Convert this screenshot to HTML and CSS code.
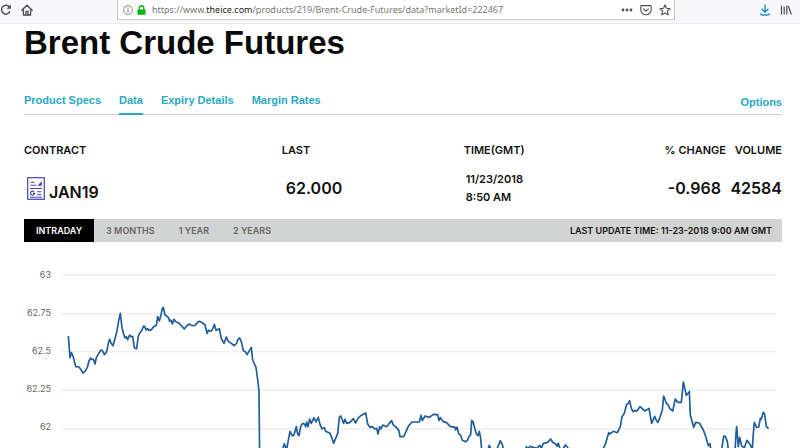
FILE: index.html
```html
<!DOCTYPE html>
<html lang="en">
<head>
<meta charset="utf-8">
<title>Brent Crude Futures</title>
<link rel="stylesheet" href="styles.css">
</head>
<body>
<header class="toolbar">
  <div class="nav-buttons">
    <button class="tool" aria-label="Reload"><svg width="12" height="12" viewBox="0 0 12 12"><path d="M9.6 3.2A4.4 4.4 0 1 0 10 7.4" fill="none" stroke="#4c4c4f" stroke-width="1.4"/><path d="M10.8.6v4.2H6.6z" fill="#4c4c4f"/></svg></button>
    <button class="tool" aria-label="Home"><svg width="12" height="12" viewBox="0 0 12 12"><path d="M.8 6.2 6 1.2l5.200 5M2.400 5.400v5.600h7.200V5.400M5 11V7.300h2V11" fill="none" stroke="#4c4c4f" stroke-width="1.300" stroke-linejoin="round" stroke-linecap="round"/></svg></button>
  </div>
  <div class="address">
    <svg width="10" height="10" viewBox="0 0 10 10"><circle cx="5" cy="5" r="4.400" fill="none" stroke="#777" stroke-width=".9"/><path d="M5 4.300v3.200M5 2.400v1.100" stroke="#777" stroke-width="1.100"/></svg>
    <svg width="9" height="10" viewBox="0 0 9 10"><path d="M2.200 5V3a2.300 2.300 0 0 1 4.600 0v2" fill="none" stroke="#12b312" stroke-width="1.400"/><rect x=".4" y="4.400" width="8.200" height="5.400" rx=".8" fill="#12b312"/></svg>
    <div class="url">https://www.<b>theice.com</b>/products/219/Brent-Crude-Futures/data?marketId=222467</div>
    <button class="tool" aria-label="Page actions"><svg width="12" height="12" viewBox="0 0 12 12"><g fill="#4c4c4f"><circle cx="2" cy="6" r="1.400"/><circle cx="6" cy="6" r="1.400"/><circle cx="10" cy="6" r="1.400"/></g></svg></button>
    <button class="tool" aria-label="Save to Pocket"><svg width="12" height="12" viewBox="0 0 12 12"><path d="M1.600 1.600h8.800q.8 0 .8.800v3.200a5.200 5.200 0 0 1-10.400 0V2.400q0-.8.800-.8zM3.600 4.800 6 7.100l2.400-2.300" fill="none" stroke="#4c4c4f" stroke-width="1.100" stroke-linecap="round" stroke-linejoin="round"/></svg></button>
    <button class="tool" aria-label="Bookmark"><svg width="12" height="12" viewBox="0 0 12 12"><path d="m6 .9 1.500 3.400 3.700.4-2.800 2.500.8 3.700L6 9l-3.200 1.900.8-3.700L.8 4.700l3.700-.4z" fill="none" stroke="#4c4c4f" stroke-width="1.100" stroke-linejoin="round"/></svg></button>
  </div>
  <div class="side-buttons">
    <button class="tool" aria-label="Downloads"><svg width="12" height="12" viewBox="0 0 12 12"><path d="M6 .6v7.200M2.600 4.800 6 8.200l3.400-3.400M1.600 9.200c.2 1.400.6 1.800 1.400 1.800h6c.8 0 1.200-.4 1.400-1.800" fill="none" stroke="#2a8fc8" stroke-width="1.400"/></svg></button>
    <button class="tool" aria-label="Library"><svg width="12" height="12" viewBox="0 0 12 12"><path d="M1.500 1.500v9M4.200 2.500v8M6.800 1.500v9M8.300 2l3 8.500" fill="none" stroke="#4c4c4f" stroke-width="1.200"/></svg></button>
  </div>
</header>
<main class="page">
  <h1>Brent Crude Futures</h1>
  <nav class="tabs">
    <a href="#specs">Product Specs</a>
    <a href="#data" class="current">Data</a>
    <a href="#expiry">Expiry Details</a>
    <a href="#margin">Margin Rates</a>
    <a href="#options" class="options">Options</a>
  </nav>
  <table class="quote">
    <colgroup><col class="c-contract"><col class="c-last"><col class="c-time"><col><col class="c-volume"></colgroup>
    <thead>
      <tr><th>CONTRACT</th><th>LAST</th><th>TIME(GMT)</th><th class="num">% CHANGE</th><th class="num">VOLUME</th></tr>
    </thead>
    <tbody>
      <tr>
        <td><div class="contract"><svg width="18" height="23" viewBox="0 0 18 23"><g fill="none" stroke="#4545ad"><rect x=".7" y=".7" width="16.600" height="21.600" stroke-width="1.200"/><path d="M3.500 5.200h4M3.500 8.200h6M3 11.500h12M10 14.700h4.500M10 17.700h4.500M3 20.200h12" stroke-width="1.100"/><path d="M7 14.800a2 2 0 1 0 .5 1.600H6" stroke-width="1.200"/></g><path d="M10.500 8.700 14.800 4v4.700z" fill="#4545ad"/></svg><span>JAN19</span></div></td>
        <td class="last">62.000</td>
        <td class="time">11/23/2018<br>8:50 AM</td>
        <td class="num change">-0.968</td>
        <td class="num">42584</td>
      </tr>
    </tbody>
  </table>
  <div class="range">
    <button class="active">INTRADAY</button>
    <button>3 MONTHS</button>
    <button>1 YEAR</button>
    <button>2 YEARS</button>
    <span class="updated">LAST UPDATE TIME: 11-23-2018 9:00 AM GMT</span>
  </div>
  <svg class="chart" viewBox="72 -54 2274 618" role="img" aria-label="Intraday price">
    <path class="grid" d="M183 45H2328M183 162H2328M183 275H2328M183 390H2328M183 507H2328"/>
    <g class="axis">
      <text x="153" y="53">63</text>
      <text x="153" y="167">62.75</text>
      <text x="153" y="282">62.5</text>
      <text x="153" y="397">62.25</text>
      <text x="153" y="510">62</text>
    </g>
    <polyline class="price" points="205,228 210,293 214,278 219,288 227,320 237,321 242,328 249,339 255,334 262,322 267,303 272,294 276,298 280,298 285,312 289,293 296,281 303,270 308,273 313,284 320,275 325,250 329,238 333,249 339,257 345,236 351,212 356,182 361,160 366,203 371,222 375,234 379,230 383,239 389,225 393,230 398,229 403,264 410,266 415,228 420,218 425,212 431,198 434,199 438,210 442,206 447,211 454,209 460,201 469,196 473,170 478,183 483,165 487,145 490,142 495,165 505,172 509,184 513,180 517,192 522,178 527,185 535,188 545,198 553,207 560,198 568,192 576,197 585,196 593,187 598,184 608,189 615,195 621,220 625,211 633,214 638,207 643,193 648,211 658,206 664,236 672,250 679,231 685,244 694,250 702,257 710,250 714,238 719,234 724,245 730,272 736,275 741,284 747,274 754,262 758,300 768,322 774,366 777,395 779,600 845,600 849,563 853,551 858,565 861,563 866,535 870,514 877,528 882,524 889,500 893,522 897,527 902,500 908,490 914,493 917,500 920,486 924,500 929,477 934,490 942,473 948,486 955,472 960,493 966,506 973,503 977,514 990,520 996,535 1001,550 1007,535 1013,521 1018,472 1022,468 1027,480 1031,490 1035,478 1040,490 1050,487 1060,476 1067,489 1074,475 1081,468 1090,463 1097,459 1103,492 1110,502 1117,500 1124,507 1130,505 1134,522 1139,500 1143,507 1148,495 1160,500 1168,490 1175,482 1180,495 1190,503 1197,513 1200,530 1211,530 1218,515 1225,499 1236,486 1258,486 1263,466 1267,482 1275,468 1288,472 1300,463 1313,464 1317,482 1321,473 1330,485 1340,488 1350,499 1365,502 1367,510 1371,501 1376,521 1381,524 1387,541 1397,545 1402,541 1408,528 1412,524 1415,481 1419,485 1425,508 1429,521 1434,527 1438,514 1442,535 1446,580 1462,575 1468,556 1474,572 1490,570 1501,542 1508,556 1512,600 1570,600 1579,560 1584,566 1590,559 1600,562 1610,565 1619,556 1624,565 1630,550 1643,547 1652,537 1658,547 1668,553 1671,559 1675,550 1681,570 1690,565 1696,555 1703,562 1710,600 1805,600 1808,570 1817,550 1826,518 1829,522 1840,514 1852,518 1861,500 1866,470 1873,460 1880,432 1884,432 1889,422 1894,445 1899,455 1904,451 1910,454 1920,440 1935,453 1947,445 1955,490 1964,469 1970,483 1974,487 1980,472 1987,450 1991,408 1999,430 2004,434 2010,446 2018,453 2026,417 2033,427 2044,427 2050,366 2059,406 2068,395 2071,465 2081,502 2087,487 2098,489 2110,510 2116,526 2125,557 2130,551 2137,600 2160,600 2166,562 2171,528 2176,529 2182,545 2189,600 2204,600 2208,520 2210,500 2215,560 2219,532 2225,558 2233,563 2241,541 2250,553 2257,568 2260,520 2263,487 2270,502 2276,501 2281,475 2284,477 2290,457 2294,462 2299,500 2306,506"/>
  </svg>
</main>
</body>
</html>
```
FILE: styles.css
```css
* { box-sizing: border-box; }
body { margin: 0; background: #fff; color: #111; font-family: Inter, "Liberation Sans", sans-serif; }
button { border: 0; padding: 0; background: none; font: inherit; color: inherit; }
svg { display: block; flex: none; }

.toolbar { display: flex; height: 24px; background: #f8f8fa; border-bottom: 1px solid #e9e9eb; }
.nav-buttons { display: flex; gap: 9px; width: 117px; height: 19px; align-items: center; }
.address { flex: 1; display: flex; align-items: center; gap: 4px; height: 20px; padding: 0 3px 0 5px; background: #fff; border: 1px solid #ccc; border-top: 0; }
.url { flex: 1; padding-left: 2px; font: 9px/18px "Noto Sans", sans-serif; color: #777; white-space: nowrap; }
.url b { font-weight: 400; color: #222; }
.address .tool { margin-left: 3px; }
.side-buttons { display: flex; gap: 9px; width: 125px; height: 19px; align-items: center; justify-content: flex-end; padding-right: 8px; }

.page { padding: 0 18px 0 24px; }
h1 { margin: 0; font: bold 33px/38px "Liberation Sans", sans-serif; color: #0a0a0a; }

.tabs { display: flex; gap: 18px; margin-top: 30px; height: 23px; border-bottom: 1px solid #ccc; font: bold 11px/16px "Liberation Sans", sans-serif; }
.tabs a { color: #2aa9c4; text-decoration: none; height: 23px; white-space: nowrap; }
.tabs .current { border-bottom: 2px solid #2aa9c4; }
.tabs .options { margin-left: auto; padding-top: 2px; }

.quote { width: 100%; margin-top: 26px; table-layout: fixed; border-collapse: collapse; font-weight: 600; }
.c-contract { width: 34%; }
.c-last { width: 24%; }
.c-time { width: 14%; }
.c-volume { width: 56px; }
.quote th { padding: 0; text-align: left; font-size: 11px; line-height: 18px; font-weight: 600; white-space: nowrap; }
.quote td { padding: 11px 0 13px; font-size: 16px; line-height: 18px; vertical-align: middle; white-space: nowrap; }
.quote .num { text-align: right; }
.quote .last { padding-left: 4px; }
.quote .time { padding-left: 2px; font-size: 11px; }
.quote .change { padding-right: 5px; }
.contract { display: flex; align-items: flex-end; gap: 4px; padding-left: 3px; line-height: 16px; }

.range { display: flex; height: 23px; background: #d2d4d3; font-size: 9px; line-height: 23px; font-weight: 600; color: #666; }
.range button { padding: 0 12px; }
.range .active { background: #000; color: #fff; }
.updated { margin-left: auto; padding-right: 10px; color: #111; font-weight: 600; }

.chart { width: 100%; height: auto; }
.grid { stroke: #eee; stroke-width: 4; fill: none; }
.axis { font-size: 27px; fill: #666; text-anchor: end; }
.price { fill: none; stroke: #1f5c99; stroke-width: 5; stroke-linejoin: round; }
```
